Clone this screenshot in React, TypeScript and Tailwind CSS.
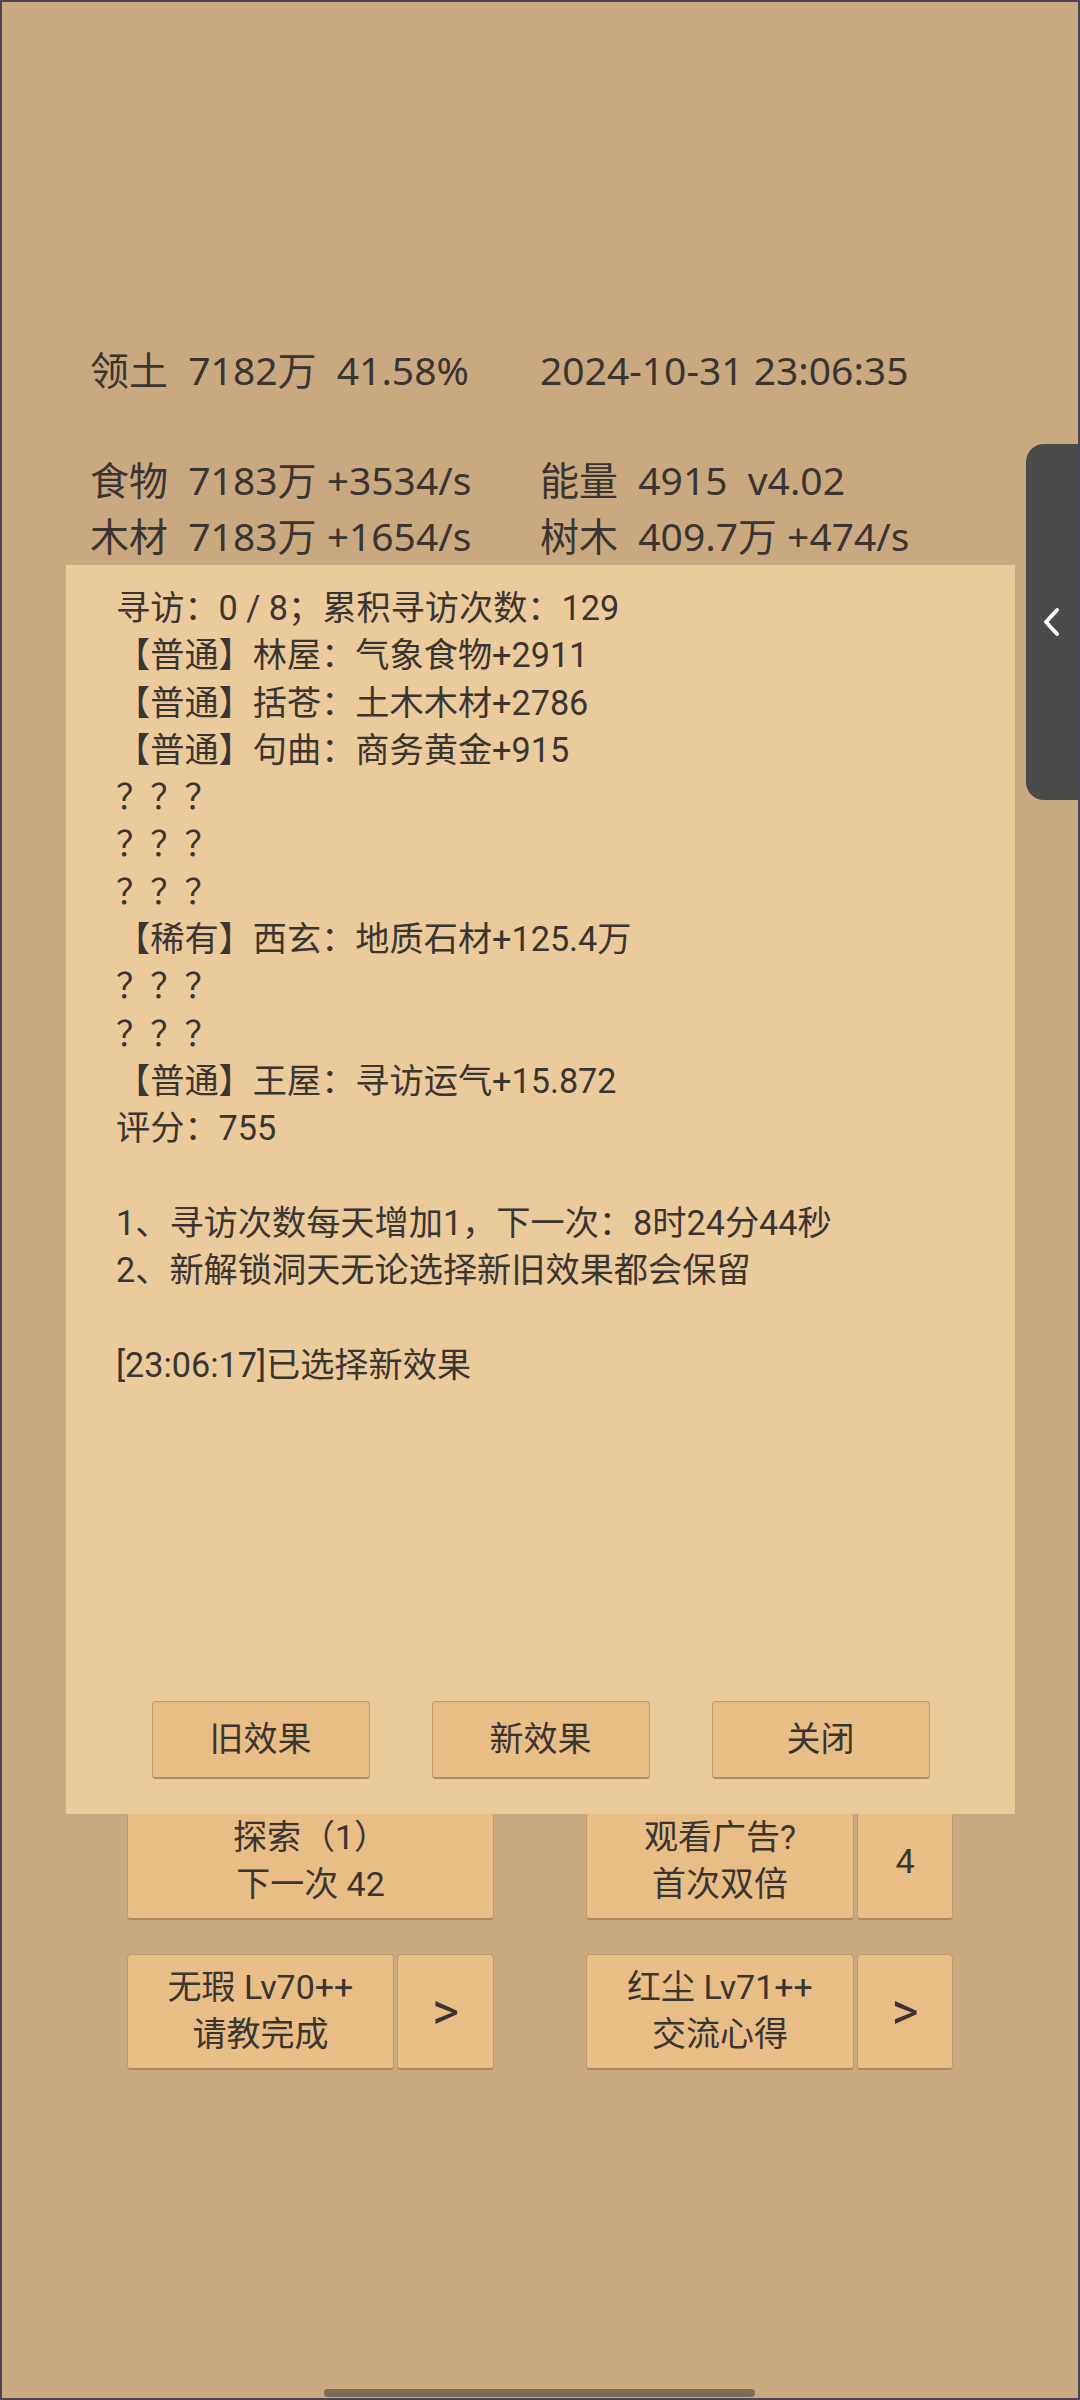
import React from "react";

const statsLeft = [
  "领土  7182万  41.58%",
  "",
  "食物  7183万 +3534/s",
  "木材  7183万 +1654/s",
];

const statsRight = [
  "2024-10-31 23:06:35",
  "",
  "能量  4915  v4.02",
  "树木  409.7万 +474/s",
];

const visitLines = [
  "寻访：0 / 8；累积寻访次数：129",
  "【普通】林屋：气象食物+2911",
  "【普通】括苍：土木木材+2786",
  "【普通】句曲：商务黄金+915",
  "？？？",
  "？？？",
  "？？？",
  "【稀有】西玄：地质石材+125.4万",
  "？？？",
  "？？？",
  "【普通】王屋：寻访运气+15.872",
  "评分：755",
  "",
  "1、寻访次数每天增加1，下一次：8时24分44秒",
  "2、新解锁洞天无论选择新旧效果都会保留",
  "",
  "[23:06:17]已选择新效果",
];

function GameButton({
  className,
  children,
}: {
  className: string;
  children: React.ReactNode;
}) {
  return (
    <button
      className={
        "flex flex-col items-center justify-center bg-[#e9bd86] border border-[#bf9a6d] border-b-2 border-b-[#a98a63] rounded-[4px] text-[#3a3531] " +
        className
      }
    >
      {children}
    </button>
  );
}

export default function App() {
  return (
    <div className="relative w-[1080px] h-[2400px] overflow-hidden bg-[#caa981] border-2 border-[#4a4558] text-[#3a3531] font-['Roboto','Noto_Sans_CJK_SC',sans-serif]">
      {/* Stats */}
      <div className="pt-[340px] pl-[88px] grid grid-cols-[450px_1fr] text-[39px] leading-[55.2px] whitespace-pre font-['Noto_Sans','Noto_Sans_CJK_SC',sans-serif]">
        {statsLeft.map((l, i) => (
          <React.Fragment key={i}>
            <div className="h-[55.2px]">{l}</div>
            <div className="h-[55.2px]">{statsRight[i]}</div>
          </React.Fragment>
        ))}
      </div>

      {/* Main buttons (partly under dialog) */}
      <div className="mt-[1241px] flex flex-col items-center gap-[34px] text-[34px] leading-[47px]">
        <div className="flex gap-[92px]">
          <GameButton className="w-[367px] h-[116px]">
            <span>探索（1）</span>
            <span>下一次 42</span>
          </GameButton>
          <div className="flex gap-[3px]">
            <GameButton className="w-[268px] h-[116px]">
              <span>观看广告?</span>
              <span>首次双倍</span>
            </GameButton>
            <GameButton className="w-[96px] h-[116px]">
              <span>4</span>
            </GameButton>
          </div>
        </div>
        <div className="flex gap-[92px]">
          <div className="flex gap-[3px]">
            <GameButton className="w-[267px] h-[116px]">
              <span>无瑕 Lv70++</span>
              <span>请教完成</span>
            </GameButton>
            <GameButton className="w-[97px] h-[116px] text-[52px]">
              <span>&gt;</span>
            </GameButton>
          </div>
          <div className="flex gap-[3px]">
            <GameButton className="w-[268px] h-[116px]">
              <span>红尘 Lv71++</span>
              <span>交流心得</span>
            </GameButton>
            <GameButton className="w-[96px] h-[116px] text-[52px]">
              <span>&gt;</span>
            </GameButton>
          </div>
        </div>
      </div>

      {/* Dialog */}
      <div className="absolute left-[64px] top-[563px] w-[949px] h-[1249px] bg-[#ebca9c] flex flex-col">
        <div className="pt-[20px] pl-[50px] text-[34.2px] leading-[47.3px] whitespace-pre">
          {visitLines.map((l, i) => (
            <div key={i} className="h-[47.3px]">
              {l}
            </div>
          ))}
        </div>
        <div className="mt-auto pb-[35px] flex justify-center gap-[62px] text-[34px]">
          <GameButton className="w-[218px] h-[78px]">旧效果</GameButton>
          <GameButton className="w-[218px] h-[78px]">新效果</GameButton>
          <GameButton className="w-[218px] h-[78px]">关闭</GameButton>
        </div>
      </div>

      {/* Side tab */}
      <div className="absolute right-[-2px] top-[442px] w-[54px] h-[356px] bg-[#4a4a4a] rounded-l-[18px] flex items-center justify-center">
        <svg width="30" height="36" viewBox="0 0 30 36" className="mr-[2px]">
          <polyline
            points="20,6 9,18 20,30"
            fill="none"
            stroke="#ffffff"
            strokeWidth="4"
            strokeLinecap="round"
            strokeLinejoin="round"
          />
        </svg>
      </div>

      {/* Home indicator */}
      <div className="absolute left-[322px] bottom-[1px] w-[431px] h-[8px] rounded-full bg-[#7d6c55]" />
    </div>
  );
}
